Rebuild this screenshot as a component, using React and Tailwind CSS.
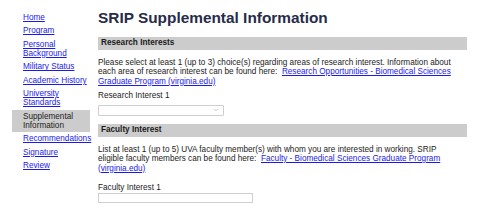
import { ChevronDown } from 'lucide-react'

const navItems = [
  { label: 'Home' },
  { label: 'Program' },
  { label: 'Personal Background' },
  { label: 'Military Status' },
  { label: 'Academic History' },
  { label: 'University Standards' },
  { label: 'Supplemental Information', active: true },
  { label: 'Recommendations' },
  { label: 'Signature' },
  { label: 'Review' },
]

function SectionBar({ children }) {
  return (
    <div className="bg-[#cccccc] h-[13px] px-[3px] flex items-center text-[8.2px] font-bold text-[#1a1a1a]">
      {children}
    </div>
  )
}

export default function App() {
  return (
    <div className="w-[481px] h-[208px] bg-white flex font-['Liberation_Sans',Arial,sans-serif] text-[#222]">
      {/* Sidebar */}
      <nav className="w-[78px] ml-[12px] pt-[11px] flex flex-col gap-[0.45px] shrink-0">
        {navItems.map(item => (
          <div
            key={item.label}
            className={`pl-[11px] pr-[2px] py-[2px] text-[8.2px] leading-[9px] ${item.active ? 'bg-[#cccccc] text-[#222]' : ''}`}
          >
            {item.active ? item.label : (
              <a href="#" className="text-[#1a1aee] underline">{item.label}</a>
            )}
          </div>
        ))}
      </nav>

      {/* Main */}
      <main className="ml-[8px] w-[369px] pt-[8px]">
        <h1 className="text-[15.4px] font-bold text-[#262c49] leading-[20px] mb-[9px]">SRIP Supplemental Information</h1>

        <SectionBar>Research Interests</SectionBar>
        <p className="text-[8.2px] leading-[9.5px] mt-[7.5px] pr-[4px]">
          Please select at least 1 (up to 3) choice(s) regarding areas of research interest. Information about each area of research interest can be found here:&nbsp;{' '}
          <a href="#" className="text-[#1a1aee] underline">Research Opportunities - Biomedical Sciences Graduate Program (virginia.edu)</a>
        </p>

        <label className="block text-[8.2px] leading-[9.5px] mt-[5px]">Research Interest 1</label>
        <div className="w-[126px] h-[11px] border border-[#cfcfcf] rounded-[1px] mt-[4px] flex items-center justify-end pr-[4px]">
          <ChevronDown size={6} strokeWidth={2} className="text-[#888]" />
        </div>

        <div className="mt-[8px]">
          <SectionBar>Faculty Interest</SectionBar>
        </div>
        <p className="text-[8.2px] leading-[9.5px] mt-[8px] pr-[4px]">
          List at least 1 (up to 5) UVA faculty member(s) with whom you are interested in working. SRIP eligible faculty members can be found here:&nbsp;{' '}
          <a href="#" className="text-[#1a1aee] underline">Faculty - Biomedical Sciences Graduate Program (virginia.edu)</a>
        </p>

        <label className="block text-[8.2px] leading-[9.5px] mt-[10px]">Faculty Interest 1</label>
        <div className="w-[155px] h-[10px] border border-[#cfcfcf] mt-[0px]" />
      </main>
    </div>
  )
}
